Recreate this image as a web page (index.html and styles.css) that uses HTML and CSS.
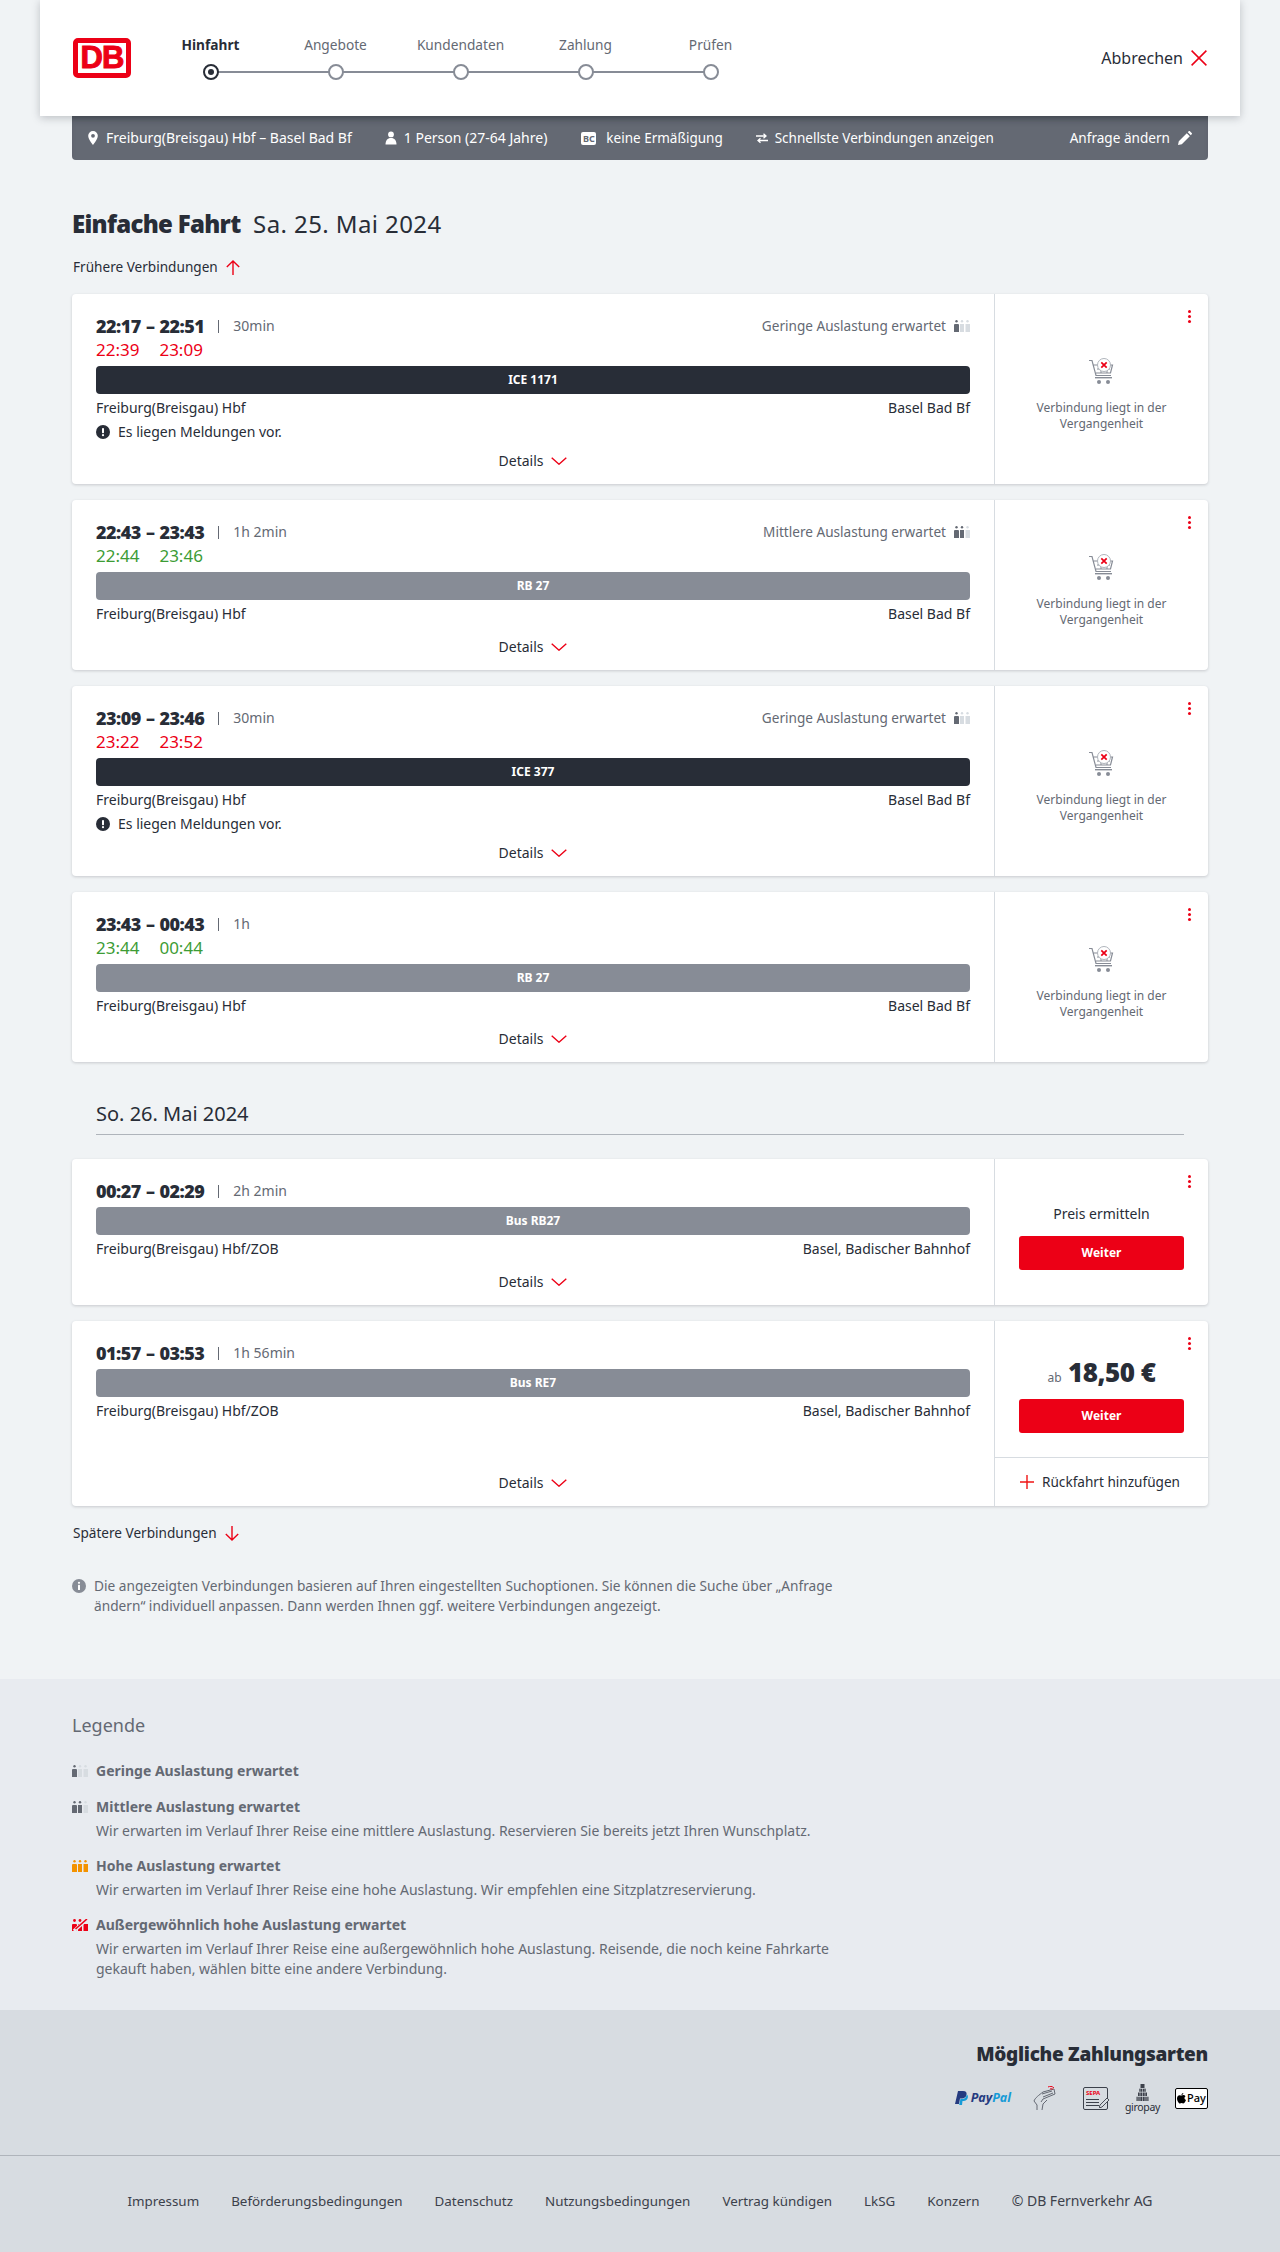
FILE: index.html
```html
<!DOCTYPE html>
<html lang="de">
  <head>
    <meta charset="UTF-8" />
    <meta name="viewport" content="width=device-width, initial-scale=1.0" />
    <title>Einfache Fahrt</title>
    <link rel="stylesheet" href="styles.css">
  </head>
  <body>
    <svg class="sprite" xmlns="http://www.w3.org/2000/svg">
      <symbol id="load-1" viewBox="0 0 16 12">
        <circle cx="2.5" cy="1.2" r="1.2" fill="#646973"/><path d="M0 5a1 1 0 0 1 1-1h3a1 1 0 0 1 1 1v7H0z" fill="#646973"/>
        <circle cx="8" cy="1.2" r="1.2" fill="#d7dce1"/><rect x="6" y="4" width="4" height="8" fill="#d7dce1"/>
        <circle cx="13.5" cy="1.2" r="1.2" fill="#d7dce1"/><rect x="11.5" y="4" width="4.5" height="8" fill="#d7dce1"/>
      </symbol>
      <symbol id="load-2" viewBox="0 0 16 12">
        <circle cx="2.5" cy="1.2" r="1.2" fill="#646973"/><path d="M0 5a1 1 0 0 1 1-1h3a1 1 0 0 1 1 1v7H0z" fill="#646973"/>
        <circle cx="8" cy="1.2" r="1.2" fill="#646973"/><rect x="6" y="4" width="4" height="8" fill="#646973"/>
        <circle cx="13.5" cy="1.2" r="1.2" fill="#d7dce1"/><rect x="11.5" y="4" width="4.5" height="8" fill="#d7dce1"/>
      </symbol>
      <symbol id="load-3" viewBox="0 0 16 12">
        <circle cx="2.5" cy="1.2" r="1.2" fill="#f39200"/><path d="M0 5a1 1 0 0 1 1-1h3a1 1 0 0 1 1 1v7H0z" fill="#f39200"/>
        <circle cx="8" cy="1.2" r="1.2" fill="#f39200"/><rect x="6" y="4" width="4" height="8" fill="#f39200"/>
        <circle cx="13.5" cy="1.2" r="1.2" fill="#f39200"/><rect x="11.5" y="4" width="4.5" height="8" fill="#f39200"/>
      </symbol>
      <symbol id="load-4" viewBox="0 0 16 12">
        <circle cx="2.5" cy="1.500" r="1.400" fill="#ec0016"/><path d="M0 6a1 1 0 0 1 1-1h3a1 1 0 0 1 1 1v6H0z" fill="#ec0016"/>
        <circle cx="8" cy="1.500" r="1.400" fill="#ec0016"/><rect x="6" y="5" width="4" height="7" fill="#ec0016"/>
        <rect x="11.5" y="5" width="4.5" height="7" fill="#ec0016"/>
        <path d="M2 12 15 0" stroke="#e8ebf0" stroke-width="3.400"/><path d="M3.500 10 15 0" stroke="#ec0016" stroke-width="1.600"/>
      </symbol>
      <symbol id="cart" viewBox="0 0 26 26">
        <path d="M0 2.500h3l4 15h15M4.500 7h19l-2 8H7" fill="none" stroke="#878c96" stroke-width="1.200"/>
        <path d="M8 11h13M12 7v8M18 7v8" fill="none" stroke="#878c96" stroke-width="1"/>
        <rect x="6" y="19" width="17" height="1.400" fill="#878c96"/>
        <circle cx="10" cy="24" r="2" fill="#878c96"/><circle cx="19" cy="24" r="2" fill="#878c96"/>
        <circle cx="15" cy="7" r="6.500" fill="#fff" stroke="#afb4bb" stroke-width="1"/>
        <path d="M12.300 4.300l5.400 5.400M17.700 4.300l-5.400 5.400" stroke="#ec0016" stroke-width="1.700"/>
      </symbol>
      <symbol id="chevron" viewBox="0 0 16 8"><path d="M.7.7 8 7.200 15.300.7" fill="none" stroke="#ec0016" stroke-width="1.400"/></symbol>
      <symbol id="alert" viewBox="0 0 14 14">
        <circle cx="7" cy="7" r="7" fill="#282d37"/><rect x="6" y="3" width="2" height="5.200" rx=".8" fill="#fff"/><circle cx="7" cy="10.200" r="1.100" fill="#fff"/>
      </symbol>
    </svg>

    <header class="head">
      <div class="logo">DB</div>
      <ol class="steps">
        <li class="step current"><span>Hinfahrt</span><i class="dot"></i></li>
        <li class="step"><span>Angebote</span><i class="dot"></i></li>
        <li class="step"><span>Kundendaten</span><i class="dot"></i></li>
        <li class="step"><span>Zahlung</span><i class="dot"></i></li>
        <li class="step"><span>Prüfen</span><i class="dot"></i></li>
      </ol>
      <a class="cancel">Abbrechen
        <svg width="16" height="16" viewBox="0 0 16 16"><path d="M.6.6l14.800 14.800M15.400.6.6 15.400" stroke="#ec0016" stroke-width="1.500"/></svg>
      </a>
    </header>

    <div class="page">
      <div class="query">
        <span class="query-item">
          <svg width="14" height="14" viewBox="0 0 14 14"><path fill="#fff" d="M7 0a4.800 4.800 0 0 0-4.800 4.800C2.200 8.300 7 14 7 14s4.800-5.700 4.800-9.200A4.800 4.800 0 0 0 7 0zm0 6.700a1.900 1.900 0 1 1 0-3.800 1.900 1.900 0 0 1 0 3.800z"/></svg>
          Freiburg(Breisgau) Hbf – Basel Bad Bf
        </span>
        <span class="query-item">
          <svg width="14" height="14" viewBox="0 0 14 14"><circle cx="7" cy="3.400" r="2.900" fill="#fff"/><path fill="#fff" d="M1.500 13.500c0-3.800 1.900-6.500 5.500-6.500s5.500 2.700 5.500 6.500z"/></svg>
          1 Person (27-64 Jahre)
        </span>
        <span class="query-item narrow"><b class="bc">BC</b>keine Ermäßigung</span>
        <span class="query-item narrow">
          <svg width="14" height="14" viewBox="0 0 14 14"><path d="M1 5h10M8.500 2.800 11 5 8.500 7.200M13 9.500H3M5.500 7.300 3 9.500l2.500 2.200" fill="none" stroke="#fff" stroke-width="1.300"/></svg>
          Schnellste Verbindungen anzeigen
        </span>
        <a class="query-edit">Anfrage ändern
          <svg width="14" height="14" viewBox="0 0 14 14"><path fill="#fff" d="M0 14l.8-3.800 8-8 3 3-8 8zM9.800 1.200 10.900.1a.6.600 0 0 1 .8 0l2.200 2.200a.6.600 0 0 1 0 .8L12.800 4.200z"/></svg>
        </a>
      </div>

      <h1 class="title"><b>Einfache Fahrt</b> Sa. 25. Mai 2024</h1>
      <a class="more more-up">Frühere Verbindungen
        <svg width="14" height="15" viewBox="0 0 14 15"><path d="M7 15V1M.8 7 7 1l6.200 6" fill="none" stroke="#ec0016" stroke-width="1.400"/></svg>
      </a>

      <section class="card">
        <div class="main">
          <div class="times">
            <b>22:17</b><b class="dash">–</b><b>22:51</b>
            <div class="meta"><span class="duration">30min</span><span class="load">Geringe Auslastung erwartet <svg class="load-icon"><use href="#load-1"/></svg></span></div>
            <span class="late">22:39</span><span class="late arr">23:09</span>
          </div>
          <div class="train dark">ICE 1171</div>
          <div class="stations"><span>Freiburg(Breisgau) Hbf</span><span>Basel Bad Bf</span></div>
          <div class="notice"><svg width="14" height="14"><use href="#alert"/></svg>Es liegen Meldungen vor.</div>
          <a class="details">Details <svg width="16" height="8"><use href="#chevron"/></svg></a>
        </div>
        <div class="side past">
          <i class="menu"></i>
          <svg width="26" height="26"><use href="#cart"/></svg>
          <p>Verbindung liegt in der Vergangenheit</p>
        </div>
      </section>

      <section class="card">
        <div class="main">
          <div class="times">
            <b>22:43</b><b class="dash">–</b><b>23:43</b>
            <div class="meta"><span class="duration">1h 2min</span><span class="load">Mittlere Auslastung erwartet <svg class="load-icon"><use href="#load-2"/></svg></span></div>
            <span class="ontime">22:44</span><span class="ontime arr">23:46</span>
          </div>
          <div class="train">RB 27</div>
          <div class="stations"><span>Freiburg(Breisgau) Hbf</span><span>Basel Bad Bf</span></div>
          <a class="details">Details <svg width="16" height="8"><use href="#chevron"/></svg></a>
        </div>
        <div class="side past">
          <i class="menu"></i>
          <svg width="26" height="26"><use href="#cart"/></svg>
          <p>Verbindung liegt in der Vergangenheit</p>
        </div>
      </section>

      <section class="card">
        <div class="main">
          <div class="times">
            <b>23:09</b><b class="dash">–</b><b>23:46</b>
            <div class="meta"><span class="duration">30min</span><span class="load">Geringe Auslastung erwartet <svg class="load-icon"><use href="#load-1"/></svg></span></div>
            <span class="late">23:22</span><span class="late arr">23:52</span>
          </div>
          <div class="train dark">ICE 377</div>
          <div class="stations"><span>Freiburg(Breisgau) Hbf</span><span>Basel Bad Bf</span></div>
          <div class="notice"><svg width="14" height="14"><use href="#alert"/></svg>Es liegen Meldungen vor.</div>
          <a class="details">Details <svg width="16" height="8"><use href="#chevron"/></svg></a>
        </div>
        <div class="side past">
          <i class="menu"></i>
          <svg width="26" height="26"><use href="#cart"/></svg>
          <p>Verbindung liegt in der Vergangenheit</p>
        </div>
      </section>

      <section class="card">
        <div class="main">
          <div class="times">
            <b>23:43</b><b class="dash">–</b><b>00:43</b>
            <div class="meta"><span class="duration">1h</span></div>
            <span class="ontime">23:44</span><span class="ontime arr">00:44</span>
          </div>
          <div class="train">RB 27</div>
          <div class="stations"><span>Freiburg(Breisgau) Hbf</span><span>Basel Bad Bf</span></div>
          <a class="details">Details <svg width="16" height="8"><use href="#chevron"/></svg></a>
        </div>
        <div class="side past">
          <i class="menu"></i>
          <svg width="26" height="26"><use href="#cart"/></svg>
          <p>Verbindung liegt in der Vergangenheit</p>
        </div>
      </section>

      <h2 class="day">So. 26. Mai 2024</h2>

      <section class="card">
        <div class="main">
          <div class="times">
            <b>00:27</b><b class="dash">–</b><b>02:29</b>
            <div class="meta"><span class="duration">2h 2min</span></div>
          </div>
          <div class="train">Bus RB27</div>
          <div class="stations"><span>Freiburg(Breisgau) Hbf/ZOB</span><span>Basel, Badischer Bahnhof</span></div>
          <a class="details">Details <svg width="16" height="8"><use href="#chevron"/></svg></a>
        </div>
        <div class="side offer">
          <i class="menu"></i>
          <div class="price-ask">Preis ermitteln</div>
          <a class="btn">Weiter</a>
        </div>
      </section>

      <section class="card">
        <div class="main">
          <div class="times">
            <b>01:57</b><b class="dash">–</b><b>03:53</b>
            <div class="meta"><span class="duration">1h 56min</span></div>
          </div>
          <div class="train">Bus RE7</div>
          <div class="stations"><span>Freiburg(Breisgau) Hbf/ZOB</span><span>Basel, Badischer Bahnhof</span></div>
          <a class="details">Details <svg width="16" height="8"><use href="#chevron"/></svg></a>
        </div>
        <div class="side offer">
          <i class="menu"></i>
          <div class="price"><small>ab</small> 18,50 €</div>
          <a class="btn">Weiter</a>
          <a class="return">
            <svg width="14" height="14" viewBox="0 0 14 14"><path d="M7 0v14M0 7h14" stroke="#f01414" stroke-width="1.400"/></svg>
            Rückfahrt hinzufügen
          </a>
        </div>
      </section>

      <a class="more more-down">Spätere Verbindungen
        <svg width="14" height="15" viewBox="0 0 14 15"><path d="M7 0v14M.8 8 7 14l6.200-6" fill="none" stroke="#ec0016" stroke-width="1.400"/></svg>
      </a>

      <p class="hint">
        <svg width="14" height="14" viewBox="0 0 14 14"><circle cx="7" cy="7" r="7" fill="#878c96"/><circle cx="7" cy="3.800" r="1.100" fill="#fff"/><rect x="6" y="5.800" width="2" height="5.200" rx=".6" fill="#fff"/></svg>
        <span>Die angezeigten Verbindungen basieren auf Ihren eingestellten Suchoptionen. Sie können die Suche über „Anfrage ändern“ individuell anpassen. Dann werden Ihnen ggf. weitere Verbindungen angezeigt.</span>
      </p>
    </div>

    <section class="legend">
      <h3>Legende</h3>
      <div class="legend-row">
        <svg class="load-icon"><use href="#load-1"/></svg>
        <div><b>Geringe Auslastung erwartet</b></div>
      </div>
      <div class="legend-row">
        <svg class="load-icon"><use href="#load-2"/></svg>
        <div><b>Mittlere Auslastung erwartet</b>
          <p>Wir erwarten im Verlauf Ihrer Reise eine mittlere Auslastung. Reservieren Sie bereits jetzt Ihren Wunschplatz.</p></div>
      </div>
      <div class="legend-row">
        <svg class="load-icon"><use href="#load-3"/></svg>
        <div><b>Hohe Auslastung erwartet</b>
          <p>Wir erwarten im Verlauf Ihrer Reise eine hohe Auslastung. Wir empfehlen eine Sitzplatzreservierung.</p></div>
      </div>
      <div class="legend-row">
        <svg class="load-icon"><use href="#load-4"/></svg>
        <div><b>Außergewöhnlich hohe Auslastung erwartet</b>
          <p>Wir erwarten im Verlauf Ihrer Reise eine außergewöhnlich hohe Auslastung. Reisende, die noch keine Fahrkarte gekauft haben, wählen bitte eine andere Verbindung.</p></div>
      </div>
    </section>

    <section class="payment">
      <h3>Mögliche Zahlungsarten</h3>
      <div class="pay-icons">
        <span class="paypal">
          <svg width="13" height="14" viewBox="0 0 13 14"><path fill="#253b80" d="M3 0h5c3 0 4 1.500 3.500 3.800C11 6.500 9 7.500 7 7.500H5L4 13H0z"/><path fill="#179bd7" d="M11.800 3.500c1.500 1 1.200 2.800.7 4-.6 1.600-2 2.500-3.800 2.500H7.500L7 14H4.200l.3-1.500L5.400 8H7c2.300 0 4.300-1.200 4.800-4.500z"/></svg>
          <span><b class="pay">Pay</b><b class="pal">Pal</b></span>
        </span>
        <svg class="contactless" width="23" height="24" viewBox="0 0 23 24">
          <path d="M4 24v-5L1 15c1-3 5-6 9-9l11-3 1 5-12 5-2 3M9 24l1-6 4-4" fill="none" stroke="#646973" stroke-width="1"/>
          <path d="M9 8l10-3M10 11l10-4" fill="none" stroke="#646973" stroke-width="1"/>
          <path d="M15 1c2-1 4-1 6 1M17 3c1-.5 2-.5 3 .5" fill="none" stroke="#ec0016" stroke-width="1"/>
        </svg>
        <span class="sepa">
          <b>SEPA</b><i></i><i></i><i></i>
          <svg width="11" height="11" viewBox="0 0 11 11"><path d="M0 11l1-3 7-7 2 2-7 7z" fill="#d7dce1" stroke="#3c414b" stroke-width=".9"/></svg>
        </span>
        <span class="giropay">
          <svg width="15" height="17" viewBox="0 0 15 17"><path fill="#3c414b" d="M5.500 0h4v4h-4zM4 4.800h7v3H4zM3 8.500h9v3.500H3zM1.500 12.700h12V17h-12z"/><path d="M7.500 4v13M5 5v12M10 5v12M3 12v5M12 12v5" stroke="#d7dce1" stroke-width=".6"/></svg>
          <span>giropay</span>
        </span>
        <span class="applepay">
          <svg width="9" height="11" viewBox="0 0 9 11"><path fill="#000" d="M6.300 0c.1 1-.7 2.100-1.800 2C4.400 1 5.300.1 6.300 0zM4.500 2.600c.5 0 1.100-.5 2-.5.700 0 1.500.4 2 1.100-1.600 1-1.300 3.100.5 3.900-.5 1.400-1.500 3.400-2.700 3.400-.7 0-1-.4-1.700-.4s-1 .4-1.700.4C1.700 10.500 0 7.800 0 5.500 0 3.400 1.300 2.200 2.600 2.200c.8 0 1.400.4 1.900.4z"/></svg>
          Pay
        </span>
      </div>
    </section>

    <footer class="foot">
      <a>Impressum</a>
      <a>Beförderungsbedingungen</a>
      <a>Datenschutz</a>
      <a>Nutzungsbedingungen</a>
      <a>Vertrag kündigen</a>
      <a>LkSG</a>
      <a>Konzern</a>
      <span class="copy">© DB Fernverkehr AG</span>
    </footer>
  </body>
</html>
```

FILE: styles.css
```css
* {
  margin: 0;
  padding: 0;
  box-sizing: border-box;
}
body {
  font-family: "Noto Sans", Arial, sans-serif;
  font-size: 14px;
  line-height: 24px;
  color: #282d37;
  background-color: #f0f3f5;
}
svg {
  display: block;
  flex: none;
}
.sprite {
  display: none;
}

/* kopf */
.head {
  position: relative;
  z-index: 2;
  display: flex;
  align-items: flex-start;
  height: 116px;
  margin: 0 40px;
  padding-left: 33px;
  background: white;
  box-shadow: 0 2px 8px rgba(40, 45, 55, 0.25);
}
.logo {
  width: 58px;
  height: 40px;
  margin-top: 38px;
  border: 5px solid #ec0016;
  border-radius: 5px;
  font-family: "Liberation Sans", Arial, sans-serif;
  font-size: 31px;
  font-weight: bold;
  line-height: 30px;
  letter-spacing: -1px;
  text-align: center;
  color: #ec0016;
  -webkit-text-stroke: 1px #ec0016;
}
.steps {
  display: flex;
  margin: 35px 0 0 17px;
  list-style: none;
}
.step {
  position: relative;
  display: flex;
  flex-direction: column;
  align-items: center;
  width: 125px;
  font-size: 13.7px;
  line-height: 20px;
  color: #646973;
}
.step.current {
  color: #282d37;
  font-weight: 700;
}
.step:not(:last-child)::after {
  content: "";
  position: absolute;
  top: 36px;
  left: 62px;
  width: 125px;
  height: 2px;
  background: #878c96;
}
.dot {
  position: relative;
  z-index: 1;
  width: 16px;
  height: 16px;
  margin-top: 9px;
  border: 2px solid #878c96;
  border-radius: 50%;
  background: white;
}
.current .dot {
  border-color: #282d37;
}
.current .dot::after {
  content: "";
  display: block;
  width: 6px;
  height: 6px;
  margin: 3px;
  border-radius: 50%;
  background: #282d37;
}
.cancel {
  display: flex;
  align-items: center;
  gap: 8px;
  margin: 46px 33px 0 auto;
  font-size: 16px;
}

/* suchleiste */
.page {
  padding: 0 72px;
}
.query {
  display: flex;
  align-items: center;
  height: 44px;
  padding: 0 16px 0 14px;
  border-radius: 0 0 4px 4px;
  background: #646973;
  color: white;
  box-shadow: inset 0 6px 6px -4px rgba(40, 45, 55, 0.5);
}
.query-item {
  display: flex;
  align-items: center;
  gap: 6px;
  margin-right: 32px;
}
.narrow {
  font-size: 13.5px;
}
.bc {
  width: 15px;
  height: 13px;
  margin: 0 4px 0 2px;
  border-radius: 2px;
  background: white;
  color: #646973;
  font-size: 9px;
  line-height: 13px;
  text-align: center;
}
.query-edit {
  display: flex;
  align-items: center;
  gap: 8px;
  margin-left: auto;
  font-size: 13.6px;
}

.title {
  margin-top: 46px;
  font-size: 24px;
  font-weight: 400;
  line-height: 36px;
  letter-spacing: 0.4px;
}
.title b {
  margin-right: 6px;
  font-weight: 900;
  letter-spacing: -0.7px;
}
.more {
  display: flex;
  align-items: center;
  gap: 8px;
  padding-left: 1px;
  font-size: 13.6px;
}
.more-up {
  margin: 13px 0 15px;
}
.more-down {
  margin-top: -1px;
}

/* verbindungen */
.card {
  display: flex;
  margin-bottom: 16px;
  border-radius: 4px;
  background: white;
  box-shadow: 0 1px 3px rgba(40, 45, 55, 0.2);
}
.main {
  display: flex;
  flex-direction: column;
  width: 922px;
  padding: 20px 24px 11px;
}
.times {
  display: grid;
  grid-template-columns: auto auto auto 1fr;
}
.times b {
  font-size: 18px;
  font-weight: 900;
  letter-spacing: -0.5px;
}
.times .dash {
  padding: 0 5px;
}
.meta {
  display: flex;
  align-items: center;
  color: #646973;
}
.duration::before {
  content: "";
  display: inline-block;
  width: 1px;
  height: 13px;
  margin: 0 14px;
  background: #646973;
  vertical-align: -2px;
}
.load {
  display: flex;
  align-items: center;
  gap: 8px;
  margin-left: auto;
  font-size: 13.6px;
}
.load-icon {
  width: 16px;
  height: 12px;
}
.late,
.ontime {
  font-size: 17px;
  grid-column: 1;
}
.arr {
  grid-column: 3;
}
.late {
  color: #ec0016;
}
.ontime {
  color: #3d9c35;
}
.train {
  height: 28px;
  margin-top: 4px;
  border-radius: 4px;
  background: #878c96;
  color: white;
  font-size: 12px;
  font-weight: 700;
  line-height: 28px;
  text-align: center;
}
.train.dark {
  background: #282d37;
}
.stations {
  display: flex;
  justify-content: space-between;
  margin-top: 2px;
}
.notice {
  display: flex;
  align-items: center;
  gap: 8px;
  height: 20px;
  margin: 2px 0 -2px;
}
.details {
  display: flex;
  align-items: center;
  justify-content: center;
  gap: 8px;
  margin-top: auto;
  padding-top: 9px;
}

.side {
  position: relative;
  display: flex;
  flex-direction: column;
  align-items: center;
  width: 214px;
  border-left: 1px solid #d7dce1;
}
.menu {
  position: absolute;
  top: 16px;
  right: 17px;
  width: 3px;
  height: 3px;
  border-radius: 50%;
  background: #ec0016;
  box-shadow: 0 5px 0 #ec0016, 0 10px 0 #ec0016;
}
.past {
  justify-content: center;
  padding-top: 12px;
}
.past p {
  width: 150px;
  margin-top: 16px;
  color: #646973;
  font-size: 12px;
  line-height: 16px;
  text-align: center;
}
.offer {
  padding-top: 43px;
}
.btn {
  width: 165px;
  height: 34px;
  margin-top: 10px;
  border-radius: 3px;
  background: #ec0016;
  color: white;
  font-size: 12px;
  font-weight: 700;
  line-height: 34px;
  text-align: center;
}
.price {
  height: 30px;
  margin-top: -7px;
  font-size: 26px;
  font-weight: 900;
  line-height: 30px;
  letter-spacing: -0.5px;
}
.price small {
  color: #646973;
  font-size: 12px;
  font-weight: 400;
  letter-spacing: 0;
}
.price + .btn {
  margin: 12px 0 24px;
}
.return {
  display: flex;
  align-items: center;
  gap: 8px;
  width: 100%;
  height: 49px;
  padding-left: 25px;
  border-top: 1px solid #d7dce1;
  font-size: 13.6px;
}
.day {
  margin: 38px 24px 24px;
  padding-bottom: 6px;
  border-bottom: 1px solid #afb4bb;
  font-size: 20px;
  font-weight: 400;
  line-height: 28px;
}
.hint {
  display: flex;
  gap: 8px;
  width: 770px;
  margin-top: 31px;
  padding-bottom: 63px;
  color: #646973;
  font-size: 13.7px;
  line-height: 20px;
}
.hint svg {
  margin-top: 3px;
}

/* legende */
.legend {
  height: 331px;
  padding: 34px 72px 0;
  background: #e8ebf0;
  color: #646973;
}
.legend h3 {
  margin-bottom: 22px;
  font-size: 18px;
  font-weight: 400;
}
.legend-row {
  display: flex;
  gap: 8px;
  margin-bottom: 13px;
}
.legend-row:first-of-type {
  margin-bottom: 12px;
}
.legend-row .load-icon {
  margin-top: 6px;
}
.legend-row b {
  font-weight: 700;
}
.legend-row p {
  width: 740px;
  margin-top: 2px;
  line-height: 20px;
}

/* zahlungsarten, fuss */
.payment {
  height: 146px;
  padding: 30px 72px 0;
  background: #d7dce1;
  border-bottom: 1px solid #afb4bb;
  text-align: right;
}
.payment h3 {
  font-size: 19px;
  font-weight: 900;
  line-height: 28px;
  letter-spacing: -0.3px;
}
.pay-icons {
  display: flex;
  align-items: center;
  justify-content: flex-end;
  margin-top: 14px;
  height: 32px;
}
.paypal {
  display: flex;
  align-items: center;
  gap: 3px;
  margin-right: 22px;
  font-size: 12.5px;
  font-style: italic;
  line-height: 14px;
}
.pay {
  color: #253b80;
}
.pal {
  color: #179bd7;
}
.contactless {
  margin-right: 27px;
}
.sepa {
  position: relative;
  display: block;
  width: 25px;
  height: 23px;
  margin-right: 18px;
  padding: 1px 2px;
  border: 1px solid #3c414b;
  border-radius: 2px;
  text-align: left;
}
.sepa b {
  display: block;
  color: #ec0016;
  font-size: 6px;
  line-height: 8px;
}
.sepa i {
  display: block;
  width: 13px;
  height: 1px;
  margin-top: 2px;
  background: #3c414b;
}
.sepa svg {
  position: absolute;
  right: -3px;
  bottom: 1px;
}
.giropay {
  display: flex;
  flex-direction: column;
  align-items: center;
  width: 33px;
  margin-right: 16px;
  font-size: 10.5px;
  line-height: 12px;
  letter-spacing: -0.3px;
}
.applepay {
  display: flex;
  align-items: center;
  justify-content: center;
  gap: 1px;
  width: 33px;
  height: 21px;
  border: 1px solid #000;
  border-radius: 2px;
  background: white;
  color: #000;
  font-size: 11px;
  font-weight: 500;
}
.foot {
  display: flex;
  justify-content: center;
  gap: 32px;
  height: 96px;
  padding-top: 33px;
  background: #d7dce1;
  color: #3c414b;
  font-size: 13.4px;
}
.copy {
  font-size: 14px;
}
```
